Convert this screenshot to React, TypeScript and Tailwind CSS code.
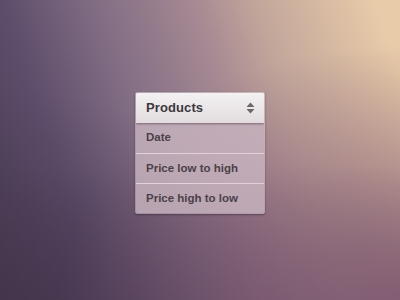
import React from "react";

export default function App() {
  const items = ["Date", "Price low to high", "Price high to low"];
  return (
    <div className="w-[400px] h-[300px] overflow-hidden flex items-start justify-center pt-[92px] bg-[radial-gradient(ellipse_at_100%_100%,rgba(128,88,114,0.85)_0%,rgba(128,88,114,0.45)_30%,rgba(128,88,114,0)_60%),linear-gradient(to_top,rgba(62,46,70,0.4)_0%,rgba(62,46,70,0)_45%),radial-gradient(ellipse_at_0%_100%,rgba(70,55,78,0.6)_0%,rgba(70,55,78,0)_50%),linear-gradient(72deg,#4a3c53_0%,#5d4d6b_20%,#846f85_40%,#a58892_58%,#c0a49a_70%,#e8cba8_95%)]" style={{ fontFamily: '"Liberation Sans", Arial, sans-serif' }}>
      <div className="w-[130px] flex flex-col rounded-[2px] shadow-[0_1px_2px_rgba(40,20,40,0.45)] border border-[rgba(255,255,255,0.35)] overflow-hidden">
        <div className="relative z-10 h-[30px] flex items-center justify-between pl-[10px] pr-[9px] bg-[linear-gradient(#f4f1f2,#e2dcdf)] shadow-[0_1px_2px_rgba(60,30,50,0.5)]">
          <span className="text-[13px] font-bold text-[#3d393c] tracking-[0.1px]">Products</span>
          <svg width="9" height="12" viewBox="0 0 9 12">
            <path d="M4.5 0.5 L8.5 5 L0.5 5 Z" fill="#6b6668" />
            <path d="M4.5 11.5 L8.5 7 L0.5 7 Z" fill="#6b6668" />
          </svg>
        </div>
        {items.map((t, i) => (
          <div
            key={t}
            className={
              i === 0
                ? "h-[30px] flex items-center pl-[10px] bg-[rgba(200,180,192,0.82)]"
                : "h-[30px] flex items-center pl-[10px] bg-[rgba(200,180,192,0.82)] border-t border-[#e0d2da]"
            }
          >
            <span className="text-[11.5px] font-bold text-[#4a4148]">{t}</span>
          </div>
        ))}
      </div>
    </div>
  );
}
